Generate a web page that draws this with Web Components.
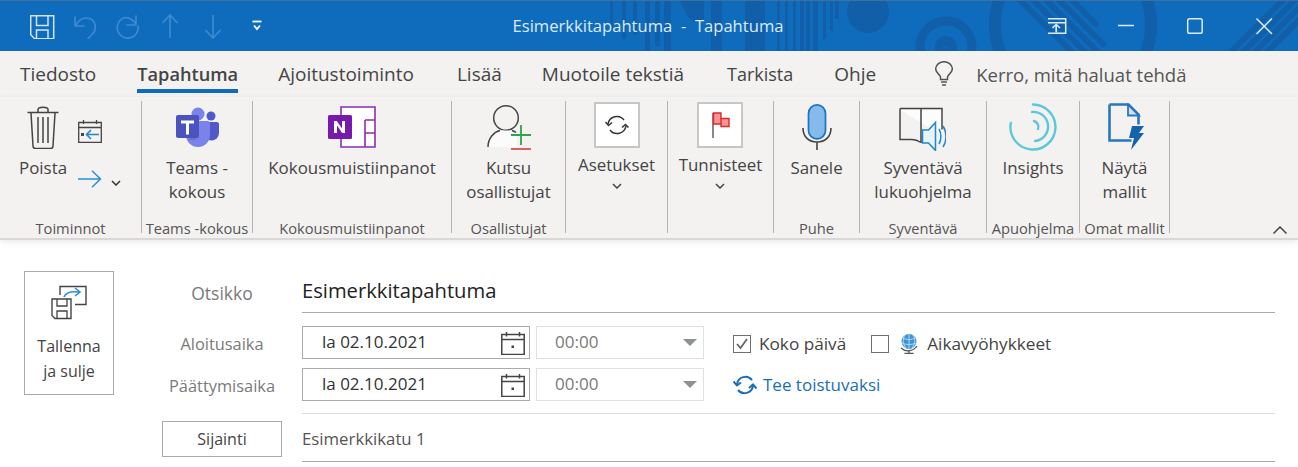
<!DOCTYPE html>
<html lang="fi"><head><meta charset="utf-8"><title>Esimerkkitapahtuma</title>
<style>
html,body{margin:0;padding:0;background:#fff}
body{width:1298px;height:467px;overflow:hidden;font-family:"Open Sans","Noto Sans",sans-serif;color:#444}
svg{display:block}
</style></head><body>
<template id="t-title"><style>
:host{display:grid;grid-template-columns:1fr auto 1fr;align-items:center;height:50px;border-top:1px solid #3f6f9c;background:#0f6cbd;position:relative;overflow:hidden;color:#dcebf8;font-size:16.600px}
.bg{position:absolute;left:0;top:0}
.l,.r{display:flex;align-items:center;position:relative}
.l{padding-left:30px}.r{justify-content:flex-end}
.c{position:relative;margin-left:-2px;padding-bottom:1px}
</style>
<svg class="bg" width="1298" height="50" viewBox="0 1 1298 50" fill="#115fa8"><g>
<path d="M610 1h3v28h-3zM622 1h4v38h-4zM633 1h4v34h-4zM645 1h5v50h-5zM655 1h5v45h-5zM664 1h7v50h-7zM711 1h11v50h-11zM745 1h20v50h-20zM777 1h3v50h-3zM785 1h3v50h-3zM793 1h3v50h-3zM800 1h4v50h-4zM806 1h4v50h-4zM813 1h5v50h-5zM823 1h3v38h-3zM830 1h3v30h-3zM835 1h4v18h-4z"/>
<path d="M680 1h24v18q-12 12-24-18z"/><circle cx="868" cy="12" r="21"/></g>
<g fill="none" stroke="#115fa8"><circle cx="946" cy="47" r="26" stroke-width="9"/><circle cx="946" cy="47" r="5" stroke-width="12"/><circle cx="1073" cy="25" r="78" stroke-width="12"/>
<path d="M1016-4l62 62M1029-4l62 62M1042-4l62 62M1055-4l50 50M1068-4l30 30M1287-4l-66 66M1299-4l-66 66M1311-4l-66 66M1323-4l-66 66" stroke-width="6"/></g></svg>
<div class="l"><slot name="qat"></slot></div><div class="c"><slot></slot></div><div class="r"><slot name="win"></slot></div></template>

<template id="t-tabs"><style>
:host{display:flex;align-items:flex-start;height:46px;background:#f3f2f1;padding-left:20px;box-sizing:border-box;font-size:19px;gap:40px}
</style><slot></slot></template>

<template id="t-tab"><style>
:host{display:block;height:41px;line-height:46px;white-space:nowrap;box-sizing:border-box;color:#444}
:host([active]){font-weight:600;font-size:18.200px;border-bottom:4px solid #0f6cbd;height:42px}
</style><slot></slot></template>

<template id="t-tell"><style>
:host{display:flex;align-items:center;gap:23px;height:46px;white-space:nowrap;color:#555;font-size:18.500px}
</style><slot></slot></template>

<template id="t-ribbon"><style>
:host{display:flex;height:143px;box-sizing:border-box;background:#f3f2f1;padding-top:4px;border-bottom:2px solid #d9d8d7;box-shadow:0 2px 7px rgba(0,0,0,.09);position:relative}
</style><slot></slot></template>

<template id="t-group"><style>
:host{display:grid;grid-template-rows:1fr auto;height:132px;width:var(--w);border-right:1px solid #b5b4b3;box-sizing:content-box;flex:none}
.b{display:flex;justify-content:center;min-height:0}
.lb{font-size:14.700px;line-height:16px;height:16px;margin-bottom:-3px;text-align:center;white-space:nowrap;color:#555;overflow:visible;display:flex;justify-content:center}
</style><div class="b"><slot></slot></div><div class="lb"><slot name="label"></slot></div></template>

<template id="t-btn"><style>
:host{display:flex;flex-direction:column;align-items:center;font-size:16.900px;line-height:24px;text-align:center;white-space:nowrap;color:#444}
.i{height:52px;display:flex;align-items:center;justify-content:center;margin-bottom:3px}
:host([boxed]) .i{height:46px;width:46px;box-sizing:border-box;border:2px solid #c6c6c6;background:#fff;margin:1px 0 5px}
</style><div class="i"><slot name="icon"></slot></div><slot></slot></template>

<template id="t-form"><style>
:host{display:flex;padding:31px 0 0 24px;gap:48px;height:227px;box-sizing:border-box;background:#fff;font-size:16px;color:#444}
.m{display:flex;flex-direction:column;width:1113px}
</style><slot name="save"></slot><div class="m"><slot></slot></div></template>

<template id="t-save"><style>
:host{display:flex;flex-direction:column;align-items:center;width:90px;height:124px;box-sizing:border-box;border:1px solid #ababab;padding-top:13px;font-size:16px;line-height:25px;color:#444;text-align:center;flex:none}
.i{height:35px;margin-bottom:14px}
</style><div class="i"><slot name="icon"></slot></div><slot></slot></template>

<template id="t-row"><style>
:host{display:grid;grid-template-columns:120px 973px;column-gap:20px;align-items:center;flex:none}
.lb{text-align:center;color:#7a7a7a;font-size:16.400px;white-space:nowrap;padding-top:1px}
.v{display:flex;align-items:center;min-width:0}
:host([rule]) .v{border-bottom:1px solid #ababab;align-self:stretch}
:host([lite]) .v{border-bottom-color:#ddd}
</style><div class="lb"><slot name="label"></slot></div><div class="v"><slot></slot></div></template>

<template id="t-field"><style>
:host{display:flex;align-items:center;justify-content:space-between;height:33px;box-sizing:border-box;border:1px solid #ababab;padding:0 4px 0 19px;width:228px;color:#333;font-size:17px;flex:none}
:host([time]){width:168px;margin-left:6px;border-color:#e0e0e0;color:#7a7a7a;padding:0 6px 0 18px}
.t{padding-bottom:2px}
</style><span class="t"><slot></slot></span><slot name="end"></slot></template>

<template id="t-check"><style>
:host{display:flex;align-items:center;color:#444;font-size:17.200px;white-space:nowrap;padding-top:2px}
.c{width:18px;height:18px;box-sizing:border-box;border:1px solid #6e6e6e;background:#fff;margin-right:8px;display:flex}
</style><div class="c"><slot name="mark"></slot></div><slot name="before"></slot><slot></slot></template>

<template id="t-sbtn"><style>
:host{display:flex;align-items:center;justify-content:center;height:36px;width:120px;box-sizing:border-box;border:1px solid #ababab;color:#444;font-size:16px}
</style><slot></slot></template>

<x-title><svg slot="qat" width="232" height="26" viewBox="30 13 232 26" fill="none">
  <g stroke="#d3e3f4" stroke-width="1.5"><path d="M30.7 15.7h23v23h-19l-4-4z"/><path d="M36.5 16v9.5h11.500V16M36.500 38.500v-8.500h11.500v8.500"/></g>
  <g stroke="#3f8bd3" stroke-width="1.600"><path d="M75 16.500v9.500h9.500M75.500 25.500q5-8 11-7.500c10 .5 11 12 5 17l-4 4"/>
  <path d="M136 15.500v9.500h-9.500M136 24.500c-3-5-7-7-11-7a10.500 10.500 0 1 0 13 8"/>
  <path d="M170 38V15M162.500 23l7.500-8 7.500 8M213 15v23M205.500 30l7.500 8 7.500-8"/></g>
  <path d="M252.500 21.500h9" stroke="#fff" stroke-width="1.800"/><path d="M254 25.500l3 3.500 3-3.500" stroke="#fff" stroke-width="1.800"/>
 </svg><span style="white-space:pre">Esimerkkitapahtuma  -  Tapahtuma</span><svg slot="win" width="250" height="20" viewBox="1048 15 250 20" fill="none" stroke="#dcebf8" stroke-width="1.500">
  <path d="M1046.700 17.700h19v14.500h-19zM1047 21.700h18.500" /><path d="M1056.200 31.500v-8M1052.500 27l3.700-3.700 3.700 3.700" stroke-width="1.600"/>
  <path d="M1118 24.500h16"/><rect x="1187.700" y="17.700" width="14.500" height="14.500" rx="1.800"/><path d="M1256.500 17.500l15.500 15.500M1272 17.500l-15.500 15.500"/>
 </svg></x-title>

<x-tabs>
 <x-tab>Tiedosto</x-tab><x-tab active style="margin-left:1px">Tapahtuma</x-tab><x-tab>Ajoitustoiminto</x-tab><x-tab style="margin-left:3px">Lisää</x-tab><x-tab>Muotoile tekstiä</x-tab><x-tab style="margin-left:3px;font-size:18px">Tarkista</x-tab><x-tab style="margin-left:1px">Ohje</x-tab>
 <x-tell style="margin-left:19px"><svg width="18" height="26" viewBox="0 0 18 26" fill="none" stroke="#555" stroke-width="1.500"><path d="M5.500 18.500v-2.500c0-2-4.800-4-4.800-8a8.300 7.300 0 0 1 16.600 0c0 4-4.800 6-4.800 8v2.500zM6 21h6M7 24h4"/></svg>Kerro, mitä haluat tehdä</x-tell>
</x-tabs>

<x-ribbon>
 <x-group style="--w:141px">
  <div style="display:flex;width:100%;padding-left:19px;box-sizing:border-box">
   <x-btn><svg slot="icon" width="32" height="43" viewBox="0 0 32 43" fill="none" stroke="#444" stroke-width="1.500"><path d="M.5 6.500h31M11 6V3.500c0-3 10-3 10 0V6M4 7l2 33c0 1.500 1 2.500 2.500 2.500h15c1.500 0 2.500-1 2.500-2.500l2-33M11 11v26M16 11v26M21 11v26"/></svg>Poista</x-btn>
   <div style="display:flex;flex-direction:column;margin-left:11px">
    <svg width="24" height="24" viewBox="0 0 24 24" fill="none" style="margin-top:18px"><path d="M.7 3.500h22.600v20H.7zM.7 8.500h22.600M5.500 1v4M18.500 1v4" stroke="#444" stroke-width="1.300"/><rect x="3" y="14" width="3" height="3" fill="#444"/><path d="M21 15.500H9M13 11l-4.500 4.500L13 20" stroke="#1e88d2" stroke-width="1.600"/></svg>
    <div style="display:flex;align-items:center;margin-top:27px"><svg width="24" height="18" viewBox="0 0 24 18" fill="none" stroke="#2b8fd6" stroke-width="1.500"><path d="M0 9h22.500M14 .8l8.500 8.200-8.500 8.200"/></svg><svg width="10" height="6" viewBox="0 0 10 6" fill="none" stroke="#333" stroke-width="1.500" style="margin:7px 0 0 9px"><path d="M1 1l4 4 4-4"/></svg></div>
   </div>
  </div>
  <span slot="label">Toiminnot</span>
 </x-group>
 <x-group style="--w:110px">
  <x-btn><svg slot="icon" width="43" height="40" viewBox="0 0 43 40"><circle cx="35" cy="9" r="4.500" fill="#5059c9"/><path d="M28 15h13c1 0 2 1 2 2v9a7 7 0 0 1-15 0z" fill="#5059c9"/><circle cx="22" cy="7" r="6.500" fill="#7b83eb"/><path d="M12 14h20c1 0 2 1 2 2v12a12 12 0 0 1-24 0V16c0-1 1-2 2-2z" fill="#7b83eb"/><path d="M20 11v22H13z" fill="#000" opacity=".12"/><rect x="0" y="8" width="23" height="23" rx="2" fill="#4b53bc"/><path d="M5 13.500h13v3h-5v11h-3v-11H5z" fill="#fff"/></svg>Teams -<br>kokous</x-btn>
  <span slot="label">Teams -kokous</span>
 </x-group>
 <x-group style="--w:198px">
  <x-btn><svg slot="icon" width="48" height="42" viewBox="0 0 48 42" fill="none"><path d="M13 1h34v40H13z" fill="#fff" stroke="#8a2db4" stroke-width="1.600"/><path d="M37 14v27M37 14h10M37 27h10" stroke="#8a2db4" stroke-width="1.600"/><rect y="9" width="24" height="24" rx="1.500" fill="#7719aa"/><path d="M6 27V15h2.800l5.200 7.500V15h3v12h-2.800L9 19.500V27z" fill="#fff"/></svg>Kokousmuistiinpanot</x-btn>
  <span slot="label">Kokousmuistiinpanot</span>
 </x-group>
 <x-group style="--w:113px">
  <x-btn><svg slot="icon" width="44" height="46" viewBox="0 0 44 46" fill="none"><circle cx="19" cy="14" r="12.300" stroke="#444" stroke-width="1.500"/><path d="M1 43c0-9 6-15 12-16.500h12l5 3v13.500z" fill="#fbfbfb"/><path d="M1 43c0-9 6-15 12-16.500M25 26.500c1.500.5 3 1 4 2" stroke="#444" stroke-width="1.500"/><path d="M24 31h20M34 21v20" stroke="#2ea44f" stroke-width="1.800"/><path d="M24 45h20" stroke="#d9534f" stroke-width="1.800"/></svg>Kutsu<br>osallistujat</x-btn>
  <span slot="label">Osallistujat</span>
 </x-group>
 <x-group style="--w:101px">
  <x-btn boxed><svg slot="icon" width="24" height="20" viewBox="0 0 24 20" fill="none" stroke="#333" stroke-width="1.500"><path d="M3 9a9 9 0 0 1 16-4M21 11a9 9 0 0 1-16 4"/><path d="M.5 7l3 3.500L7 7.500M17 12.500l3.500-3 3 3" /></svg>Asetukset<svg width="10" height="6" viewBox="0 0 10 6" fill="none" stroke="#444" stroke-width="1.500" style="margin-top:6px"><path d="M1 1l4 4 4-4"/></svg></x-btn>
 </x-group>
 <x-group style="--w:105px">
  <x-btn boxed><svg slot="icon" width="18" height="26" viewBox="0 0 18 26" fill="none" style="margin-left:1px"><path d="M1 1v25" stroke="#555" stroke-width="1.400"/><path d="M1.500 1h7.500v5.500h8v8H9V12H1.500z" fill="#f79595" stroke="#d92b2b" stroke-width="1.400"/><path d="M9 6.500v5.500" stroke="#d92b2b" stroke-width="1.400"/></svg>Tunnisteet<svg width="10" height="6" viewBox="0 0 10 6" fill="none" stroke="#444" stroke-width="1.500" style="margin-top:6px"><path d="M1 1l4 4 4-4"/></svg></x-btn>
 </x-group>
 <x-group style="--w:85px">
  <x-btn><svg slot="icon" width="30" height="46" viewBox="0 0 30 46" fill="none"><rect x="6.500" y=".9" width="17" height="34" rx="8.500" fill="#85bbeb" stroke="#1a73c4" stroke-width="1.700"/><path d="M1 24c0 9 6 14 14 14s14-5 14-14M15 38v8" stroke="#444" stroke-width="1.600"/></svg>Sanele</x-btn>
  <span slot="label">Puhe</span>
 </x-group>
 <x-group style="--w:126px">
  <x-btn><svg slot="icon" width="47" height="48" viewBox="0 -4 47 48" fill="none"><path d="M1 3h20l1.500 2 1.500-2h20v26" fill="#fcfcfc"/><path d="M1 1.500h21v34M22 35.500c-3-2-6-3-9-3H1V1.500M22 1.500h21v21M22 35.500l3-2" stroke="#444" stroke-width="1.500"/><path d="M23.500 23h6l7-7.500v28l-7-7.500h-6z" fill="#e8f2fa" stroke="#1f87cc" stroke-width="1.500"/><path d="M40 22c2.500 4 2.500 11 0 15M44 19c4 6 4 15 0 21" stroke="#1f87cc" stroke-width="1.500"/></svg>Syventävä<br>lukuohjelma</x-btn>
  <span slot="label">Syventävä</span>
 </x-group>
 <x-group style="--w:92px">
  <x-btn><svg slot="icon" width="48" height="48" viewBox="0 0 48 48" fill="none" stroke="#5cc7d9" stroke-linecap="round"><path d="M24 1.500A22.500 22.500 0 1 1 1.800 20" stroke-width="2.400"/><path d="M23 9a14.500 14.500 0 0 1 3 29" stroke-width="2.400"/><path d="M25 18a6 6 0 0 1 4 8" stroke-width="2.400"/></svg>Insights</x-btn>
  <span slot="label">Apuohjelma</span>
 </x-group>
 <x-group style="--w:89px">
  <x-btn><svg slot="icon" width="36" height="48" viewBox="0 0 36 48" fill="none" style="margin-left:4px"><path d="M1.500 1.500h19l10 10v10M1.500 1.500v36h22" stroke="#2a76bd" stroke-width="2.600"/><path d="M20 1.500v11h11z" fill="#cfe1f2" stroke="#2a76bd" stroke-width="1.800"/><path d="M24 23h12l-5 7h5L23 47l3-12h-5z" fill="#1563ac"/></svg>Näytä<br>mallit</x-btn>
  <span slot="label">Omat mallit</span>
 </x-group>
 <svg width="14" height="8" viewBox="0 0 14 8" fill="none" stroke="#444" stroke-width="1.500" style="margin:125px 0 0 103px;flex:none"><path d="M.5 7.500L7 1l6.500 6.500"/></svg>
</x-ribbon>

<x-form>
 <x-save slot="save"><svg slot="icon" width="36" height="35" viewBox="0 0 36 35" fill="none"><path d="M9 10V1.500h26v18H24" stroke="#444" stroke-width="1.400"/><path d="M13 12c2-5 7-6 15-5M24 3l5 4-5 4" stroke="#2b8fd6" stroke-width="1.600"/><path d="M1 14h19v19.500H4l-3-3z" fill="#fff" stroke="#444" stroke-width="1.400"/><path d="M6 14v7h10v-7M6 33.500V26h10v7.500" stroke="#444" stroke-width="1.300"/></svg>Tallenna<br>ja sulje</x-save>
 <x-row rule style="height:42px"><span slot="label" style="font-size:17.500px">Otsikko</span><span style="font-size:20.200px;color:#222;padding-bottom:3px">Esimerkkitapahtuma</span></x-row>
 <x-row style="margin-top:13px;height:33px"><span slot="label">Aloitusaika</span>
  <x-field>la 02.10.2021<svg slot="end" width="24" height="24" viewBox="0 0 24 24" fill="none" stroke="#444" stroke-width="1.500"><path d="M.8 3.500h22.400v20H.8zM.8 8.500h22.400M5.500 1v4.500M18.500 1v4.500"/><rect x="10.500" y="14.500" width="2.500" height="2.500" fill="#444" stroke="none"/></svg></x-field>
  <x-field time>00:00<svg slot="end" width="14" height="7" viewBox="0 0 14 7"><path d="M0 0h14L7 7z" fill="#8c9291"/></svg></x-field>
  <x-check style="margin-left:29px"><svg slot="mark" width="16" height="16" viewBox="0 0 16 16" fill="none" stroke="#666" stroke-width="1.800"><path d="M3 8l3.500 4L13 3"/></svg>Koko päivä</x-check>
  <x-check style="margin-left:25px"><svg slot="before" width="20" height="21" viewBox="0 0 20 21" fill="none" style="margin:0 8px 0 2px"><circle cx="10" cy="8.500" r="7.500" fill="#3e94d6"/><path d="M4 5c3 2 9 2 12 0M3 10c4 2 10 2 14 0M10 1v15M6 2c-3 5-2 9 1 13M14 2c3 5 2 9-1 13" stroke="#cfe6f7" stroke-width=".8"/><path d="M2 15c4 4 12 4 16-2M10 18v2.500M5.500 20.500h9" stroke="#555" stroke-width="1.300"/></svg>Aikavyöhykkeet</x-check>
 </x-row>
 <x-row style="margin-top:9px;height:33px"><span slot="label">Päättymisaika</span>
  <x-field>la 02.10.2021<svg slot="end" width="24" height="24" viewBox="0 0 24 24" fill="none" stroke="#444" stroke-width="1.500"><path d="M.8 3.500h22.400v20H.8zM.8 8.500h22.400M5.500 1v4.500M18.500 1v4.500"/><rect x="10.500" y="14.500" width="2.500" height="2.500" fill="#444" stroke="none"/></svg></x-field>
  <x-field time>00:00<svg slot="end" width="14" height="7" viewBox="0 0 14 7"><path d="M0 0h14L7 7z" fill="#8c9291"/></svg></x-field>
  <span style="display:flex;align-items:center;margin-left:29px;color:#1a6fb8;font-size:17px;white-space:nowrap"><svg width="24" height="20" viewBox="0 0 24 20" fill="none" stroke="#1a6fb8" stroke-width="2" style="margin-right:6px"><path d="M4 9a8.500 8.500 0 0 1 15-4M20 11a8.500 8.500 0 0 1-15 4"/><path d="M.5 6.500l3.500 4 4-3M16 13l4-3.500 3.500 4"/></svg>Tee toistuvaksi</span>
 </x-row>
 <x-row rule lite style="height:13px"></x-row>
 <x-row style="margin-top:6px;height:36px"><x-sbtn slot="label">Sijainti</x-sbtn><span style="font-size:16.800px;color:#555">Esimerkkikatu 1</span></x-row>
 <x-row rule style="height:6px"></x-row>
</x-form>

<script>
const reg=(n,t)=>customElements.define(n,class extends HTMLElement{constructor(){super();this.attachShadow({mode:'open'}).appendChild(document.getElementById(t).content.cloneNode(true))}});
[['x-title','t-title'],['x-tabs','t-tabs'],['x-tab','t-tab'],['x-tell','t-tell'],['x-ribbon','t-ribbon'],['x-group','t-group'],['x-btn','t-btn'],['x-form','t-form'],['x-save','t-save'],['x-row','t-row'],['x-field','t-field'],['x-check','t-check'],['x-sbtn','t-sbtn']].forEach(a=>reg(...a));
</script>
</body></html>
